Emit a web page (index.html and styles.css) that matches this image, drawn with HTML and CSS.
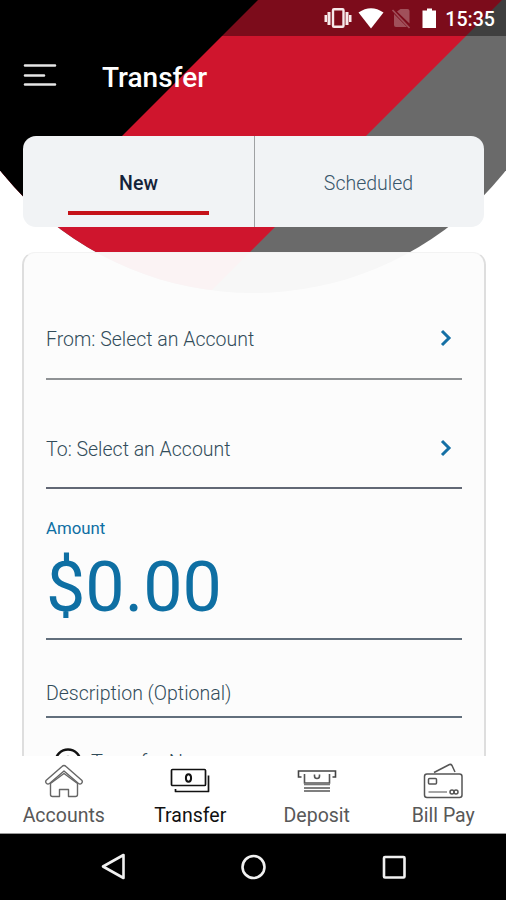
FILE: index.html
```html
<!DOCTYPE html>
<html lang="en">
<head>
<meta charset="utf-8">
<title>Transfer</title>
<link rel="stylesheet" href="styles.css">
</head>
<body>
<div class="screen">
  <svg class="backdrop" width="506" height="300" viewBox="0 0 506 300">
    <defs><clipPath id="disc"><circle cx="253" cy="-29" r="322"/></clipPath></defs>
    <g clip-path="url(#disc)">
      <path fill="#6a6a6a" d="M0 0H506V300H0Z"/>
      <path fill="#cf152d" d="M0 0H502L202 300H0Z"/>
      <path fill="#000" d="M0 0H258L-42 300H0Z"/>
    </g>
  </svg>
  <div class="status">
    <svg width="110" height="22" viewBox="323 7 110 22">
      <g fill="#f7e9ea"><path d="M323.500 15h2.500v7h-2.500zM326.500 12h3v13h-3zM344.500 12h3v13h-3zM348 15h2.500v7h-2.500z"/></g>
      <rect x="332" y="9.300" width="10.500" height="17.500" rx="1" fill="none" stroke="#f7e9ea" stroke-width="2.400"/>
      <path fill="#fff" d="M357.500 12.500Q370 4 382.500 12.500L370 28.500Z"/>
      <path fill="#a0505a" d="M399.500 9h7q2 0 2 2v12.500L396 11.500ZM393 14l13 13h-11q-2 0-2-2Z"/>
      <path d="M391.500 10l17 18" stroke="#a0505a" stroke-width="1.700"/>
      <path fill="#fff" d="M426 8.500h5v2h4v17.500h-13.500v-17.500h4.500z"/>
    </svg>
    <span class="clock">15:35</span>
  </div>
  <header class="topbar">
    <svg width="34" height="26" viewBox="0 0 34 26" stroke="#e6e6e6" stroke-width="2.600" stroke-linecap="round"><path d="M2 2.500h30M2 12.500h19M2 21.500h30"/></svg>
    <h1>Transfer</h1>
  </header>
  <nav class="tabs">
    <div class="tab active"><span>New</span></div>
    <div class="tab"><span>Scheduled</span></div>
  </nav>
  <main class="card">
    <div class="row from"><span>From: Select an Account</span><svg width="12" height="18" viewBox="0 0 12 18"><path d="M2 2l7 7-7 7"/></svg></div>
    <div class="row to"><span>To: Select an Account</span><svg width="12" height="18" viewBox="0 0 12 18"><path d="M2 2l7 7-7 7"/></svg></div>
    <div class="amount"><label>Amount</label><strong>$0.00</strong></div>
    <div class="row desc"><span>Description (Optional)</span></div>
    <div class="when"><svg width="28" height="28" viewBox="0 0 28 28"><circle cx="14" cy="14" r="12.500" fill="none" stroke="#111" stroke-width="2.400"/><circle cx="14" cy="13" r="4.500" fill="none" stroke="#555" stroke-width="1.500"/></svg><span>Transfer Now</span></div>
  </main>
  <nav class="bottom">
    <div class="item">
      <svg width="42" height="36" viewBox="0 0 42 36" fill="none" stroke="#666" stroke-width="1.400" stroke-linejoin="round">
        <path d="M21 2.500Q22 2.500 23 3.500L39 17.500Q40 19 38.500 20.500Q37 21.500 35.500 20.500L21 8L6.500 20.500Q5 21.500 3.500 20.500Q2 19 3 17.500L19 3.500Q20 2.500 21 2.500Z"/>
        <path d="M7.500 20.500V31.500Q7.500 33.500 9.500 33.500H16.500V26.500H25.500V33.500H32.500Q34.500 33.500 34.500 31.500V20.500L21 10.500Z"/>
      </svg><span>Accounts</span>
    </div>
    <div class="item on">
      <svg width="42" height="36" viewBox="0 0 42 36" fill="none" stroke="#111" stroke-width="1.700" stroke-linejoin="round">
        <rect x="2.500" y="6.500" width="34" height="16" rx="1"/><ellipse cx="19.500" cy="15" rx="2.600" ry="3.700" stroke-width="2"/><path d="M39.500 12.500V28.500H6.500V26"/>
      </svg><span>Transfer</span>
    </div>
    <div class="item">
      <svg width="42" height="36" viewBox="0 0 42 36" fill="none" stroke="#555" stroke-width="1.600">
        <path stroke="#444" d="M5.500 14H2.500V8H39.500V14H36.500"/><path d="M8.500 11V20H33.500V11M18.500 11.500V13Q18.500 15.500 21 15.500Q23.500 15.500 23.500 13V11.500"/><path stroke="#777" d="M8 21.500H34"/><path d="M8 25H34M8 28H34"/>
      </svg><span>Deposit</span>
    </div>
    <div class="item">
      <svg width="42" height="36" viewBox="0 0 42 36" fill="none" stroke="#555" stroke-width="1.500" stroke-linejoin="round">
        <rect x="2.500" y="11" width="37.500" height="23.500" rx="2.500"/><path d="M12 9.500L27.500 1.500Q29 1 30 2.500L33 9"/><rect x="6.500" y="15.500" width="8" height="5.500" rx="1"/><path stroke="#888" d="M6.500 29H25"/><circle cx="30" cy="29" r="2"/><circle cx="34" cy="29" r="2"/>
      </svg><span>Bill Pay</span>
    </div>
  </nav>
  <footer class="system">
    <svg width="506" height="66" viewBox="0 0 506 66" fill="none" stroke="#f1f1f1" stroke-width="2.600" stroke-linejoin="round">
      <path d="M123.500 21V44L103 32.500Z"/><circle cx="253.500" cy="33" r="11"/><rect x="384" y="23" width="20.500" height="20.500" rx="1"/>
    </svg>
  </footer>
</div>
</body>
</html>
```
FILE: styles.css
```css
* { box-sizing: border-box; }
body { margin: 0; background: #fff; font-family: Roboto, "Liberation Sans", sans-serif; }
.screen { position: relative; width: 506px; height: 900px; overflow: hidden; display: flex; flex-direction: column; }
.backdrop { position: absolute; left: 0; top: 0; }
.status { position: relative; height: 36px; flex: none; background: rgba(0,0,0,.4); display: flex; align-items: center; justify-content: flex-end; gap: 3px; padding-right: 11px; }
.status svg { overflow: visible; margin-right: 8px; }
.clock { color: #fff; font-size: 19.6px; font-weight: 500; line-height: 36px; padding-top: 4px; }
.topbar { position: relative; height: 100px; flex: none; display: flex; align-items: center; padding: 0 0 20px 23px; }
.topbar svg { margin-top: -1px; }
.topbar h1 { margin: 3px 0 0 45px; color: #fff; font-size: 28px; line-height: 32px; font-weight: 500; }
.tabs { position: relative; flex: none; display: flex; height: 91px; margin: 0 22px 0 23px; background: #f1f3f5; border-radius: 13px; }
.tab { flex: 1; display: flex; justify-content: center; padding-top: 36px; font-size: 19.5px; line-height: 24px; color: #38566a; font-weight: 300; }
.tab + .tab { flex: none; width: 230px; padding-right: 2px; border-left: 1px solid #9fa1a3; }
.tab.active { position: relative; color: #14233a; font-weight: 500; }
.tab.active::after { content: ""; position: absolute; left: 45px; bottom: 12px; width: 141px; height: 4px; background: #c51218; }
.card { position: relative; flex: none; height: 504px; margin: 25px 20px 0 22px; padding: 0 22px 0 23px; overflow: hidden; background: rgba(252,252,252,.965); border: solid; border-width: 1px 2px 0; border-color: #f3f3f3 #dedede; border-radius: 13px 13px 0 0; }
.row { display: flex; align-items: center; justify-content: space-between; border-bottom: 2px solid #8f9295; font-size: 19.5px; font-weight: 300; color: #324c5a; padding: 0 10px 0 0; margin-left: -1px; }
.row svg { fill: none; stroke: #1570a5; stroke-width: 3; margin-top: -2px; }
.from { height: 127px; padding-top: 47px; }
.to { height: 109px; padding-top: 31px; border-color: #626875; }
.amount { height: 151px; margin-left: -1px; border-bottom: 2px solid #626f7c; display: flex; flex-direction: column; color: #0e6fa3; }
.amount label { margin-top: 28px; font-size: 16.8px; line-height: 22px; }
.amount strong { font-size: 70px; line-height: 82px; font-weight: 400; margin-top: 7px; }
.desc { height: 78px; padding-top: 31px; border-color: #626f7c; }
.when { display: flex; align-items: center; gap: 9px; margin: 30px 0 0 7px; font-size: 20px; line-height: 28px; font-weight: 300; color: #324c5a; }
.bottom { position: relative; flex: none; height: 78px; background: #fff; display: flex; border-bottom: 1px solid #999; }
.item { flex: 1; display: flex; flex-direction: column; align-items: center; padding-top: 7px; color: #585858; font-size: 19.5px; line-height: 26px; }
.item span { margin: 4px 0 0 1px; }
.item svg { margin-left: 1px; }
.item.on { color: #111; }
.system { position: relative; flex: none; height: 66px; background: #000; }
.system svg { display: block; }
```
